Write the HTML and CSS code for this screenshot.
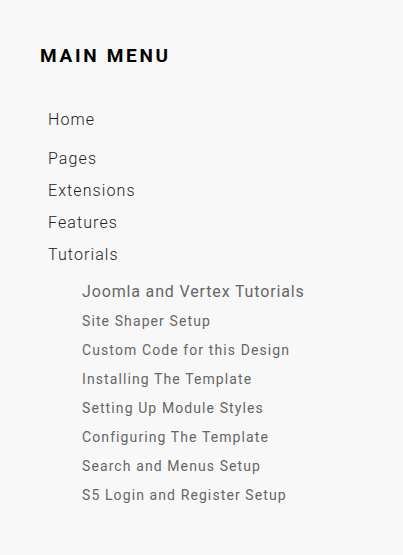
FILE: index.html
```html
<!DOCTYPE html>
<html>
<head>
  <title>Main Menu</title>
  <link rel="stylesheet" href="styles.css">
</head>
<body>
  <div class="module">
    <h3 class="module-title">Main Menu</h3>
    <ul class="menu">
      <li class="item first"><a href="#">Home</a></li>
      <li class="item"><a href="#">Pages</a></li>
      <li class="item"><a href="#">Extensions</a></li>
      <li class="item"><a href="#">Features</a></li>
      <li class="item">
        <a href="#">Tutorials</a>
        <ul class="submenu">
          <li class="sub-item lead"><a href="#">Joomla and Vertex Tutorials</a></li>
          <li class="sub-item"><a href="#">Site Shaper Setup</a></li>
          <li class="sub-item"><a href="#">Custom Code for this Design</a></li>
          <li class="sub-item"><a href="#">Installing The Template</a></li>
          <li class="sub-item"><a href="#">Setting Up Module Styles</a></li>
          <li class="sub-item"><a href="#">Configuring The Template</a></li>
          <li class="sub-item"><a href="#">Search and Menus Setup</a></li>
          <li class="sub-item"><a href="#">S5 Login and Register Setup</a></li>
        </ul>
      </li>
    </ul>
  </div>
</body>
</html>
```

FILE: styles.css
```css
body {
  margin: 0;
  background: #f8f8f8;
  font-family: Roboto, 'Liberation Sans', sans-serif;
}

.module {
  padding: 44px 40px 40px;
}

.module-title {
  margin: 0 0 36px;
  font-size: 19px;
  font-weight: 700;
  letter-spacing: 2.7px;
  text-transform: uppercase;
  color: #000;
  line-height: 24px;
}

.menu,
.submenu {
  list-style: none;
  margin: 0;
  padding: 0;
}

.menu {
  padding-left: 8px;
}

.item {
  font-size: 16px;
  line-height: 32px;
}

.item.first {
  margin-bottom: 7px;
}

.item a {
  font-weight: 300;
  letter-spacing: 1.1px;
  color: #222;
  text-decoration: none;
}

.submenu {
  padding: 6px 0 0 34px;
}

.sub-item {
  font-size: 14px;
  line-height: 29px;
}

.sub-item a {
  font-weight: 400;
  letter-spacing: 1.1px;
  color: #666;
}

.sub-item.lead {
  font-size: 16px;
  line-height: 30px;
}

.sub-item.lead a {
  letter-spacing: 0.85px;
}
```
